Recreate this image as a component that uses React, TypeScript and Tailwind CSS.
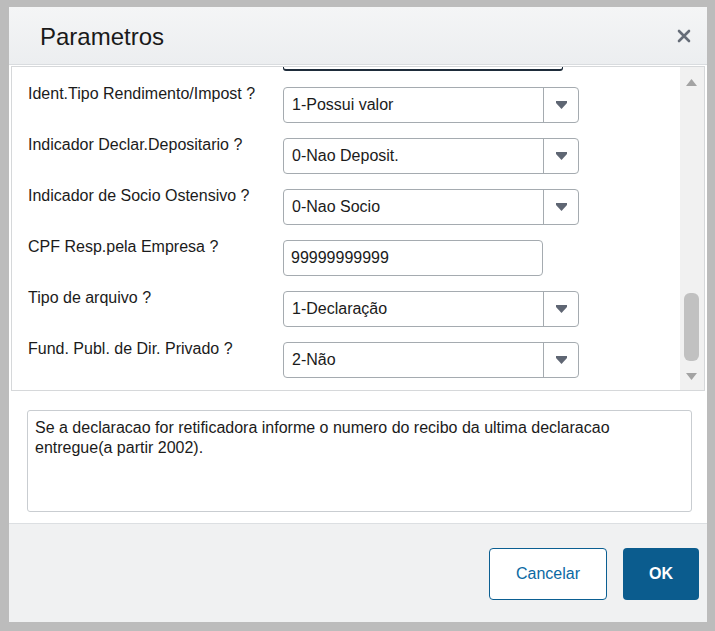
import React from "react"

const rows = [
  { label: "Ident.Tipo Rendimento/Impost ?", value: "1-Possui valor", kind: "select" },
  { label: "Indicador Declar.Depositario ?", value: "0-Nao Deposit.", kind: "select" },
  { label: "Indicador de Socio Ostensivo ?", value: "0-Nao Socio", kind: "select" },
  { label: "CPF Resp.pela Empresa ?", value: "99999999999", kind: "input" },
  { label: "Tipo de arquivo ?", value: "1-Declaração", kind: "select" },
  { label: "Fund. Publ. de Dir. Privado ?", value: "2-Não", kind: "select" },
]

function Caret() {
  return (
    <svg width="11" height="8" viewBox="0 0 11 8">
      <path d="M0 0H11V2L5.5 8L0 2Z" fill="#5f6673" />
    </svg>
  )
}

function Field({ value, kind }: { value: string; kind: string }) {
  if (kind === "input") {
    return (
      <div className="mt-[4px] flex h-[36px] w-[260px] items-center rounded-[4px] border border-[#a5abb0] bg-white pl-[7px] text-[16px] text-[#1b1b1b]">
        {value}
      </div>
    )
  }
  return (
    <div className="mt-[4px] flex h-[36px] w-[296px] rounded-[4px] border border-[#a5abb0] bg-white text-[16px] text-[#1b1b1b]">
      <div className="flex flex-1 items-center pl-[8px]">{value}</div>
      <div className="flex w-[35px] items-center justify-center border-l border-[#a5abb0]">
        <Caret />
      </div>
    </div>
  )
}

export default function App() {
  return (
    <div
      className="h-[631px] w-[715px] bg-[#bcbcbc] pl-[9px] pr-[8px] pt-[7px] pb-[9px]"
      style={{ fontFamily: '"Liberation Sans", Arial, sans-serif' }}
    >
      <div className="flex h-full flex-col bg-white">
        {/* header */}
        <div className="flex h-[58px] shrink-0 items-center justify-between border-b border-[#d9dcdf] bg-gradient-to-b from-[#f4f5f6] to-[#eceef0] pl-[31px] pr-[16px]">
          <span className="mt-[3px] text-[24px] text-[#1a1a1a]">Parametros</span>
          <svg width="14" height="14" viewBox="0 0 14 14">
            <path d="M2 2L12 12M12 2L2 12" stroke="#666d78" strokeWidth="2.6" strokeLinecap="round" />
          </svg>
        </div>

        {/* scrolling form */}
        <div className="mx-[2px] mt-[1px] flex h-[325px] shrink-0 border border-[#d6d8da] bg-white">
          <div className="flex flex-1 flex-col overflow-hidden pl-[16px]">
            <div className="ml-[255px] h-[4px] w-[280px] shrink-0 rounded-b-[3px] border-x border-b-2 border-[#1e2c3a]" />
            <div className="mt-[12px] flex flex-col gap-[11px]">
              {rows.map((row) => (
                <div key={row.label} className="flex items-start">
                  <div className="mt-[2px] w-[255px] shrink-0 text-[16px] leading-[18px] text-[#1b1b1b]">{row.label}</div>
                  <Field value={row.value} kind={row.kind} />
                </div>
              ))}
            </div>
          </div>
          <div className="flex w-[24px] shrink-0 flex-col items-center bg-[#f1f1f1] pl-[2px] pr-[3px]">
            <svg className="mt-[12px]" width="11" height="7" viewBox="0 0 11 7">
              <path d="M5.5 0L11 7H0Z" fill="#a3a3a3" />
            </svg>
            <div className="mt-[207px] h-[68px] w-[15px] rounded-[6px] bg-[#c1c1c1]" />
            <svg className="mt-[12px]" width="11" height="7" viewBox="0 0 11 7">
              <path d="M0 0H11L5.5 7Z" fill="#a3a3a3" />
            </svg>
          </div>
        </div>

        {/* help text */}
        <div className="shrink-0 pl-[18px] pr-[15px] pt-[19px] pb-[11px]">
          <div className="h-[102px] rounded-[3px] border border-[#c9cdd1] bg-white px-[7px] pt-[7px] text-[16px] leading-[20px] text-[#1b1b1b]">
            Se a declaracao for retificadora informe o numero do recibo da ultima declaracao entregue(a partir 2002).
          </div>
        </div>

        {/* footer */}
        <div className="flex flex-1 items-start justify-end gap-[16px] border-t border-[#dcdfe2] bg-[#f0f1f2] pr-[8px] pt-[24px]">
          <button className="h-[52px] w-[118px] rounded-[4px] border border-[#0b5f92] bg-white text-[16px] text-[#0b69a3]">
            Cancelar
          </button>
          <button className="h-[52px] w-[76px] rounded-[4px] bg-[#0b5c8e] text-[16px] font-bold text-white">
            OK
          </button>
        </div>
      </div>
    </div>
  )
}
